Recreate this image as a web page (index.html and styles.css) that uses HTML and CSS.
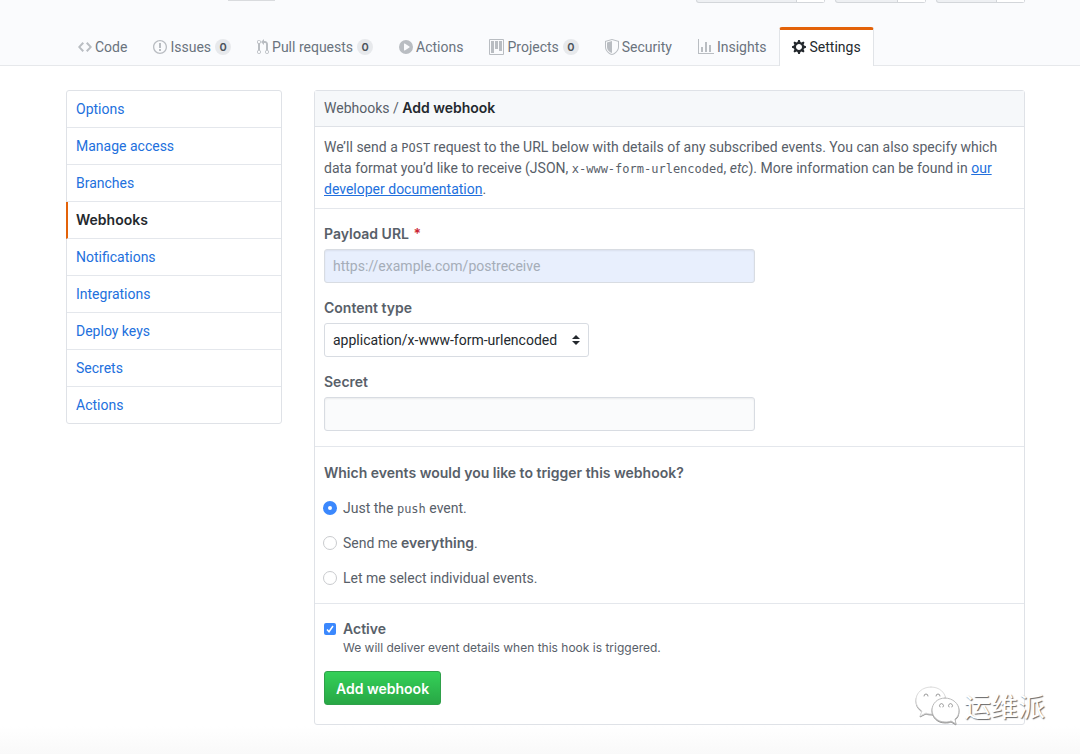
FILE: index.html
```html
<!DOCTYPE html>
<html lang="en">
<head>
<meta charset="utf-8">
<title>Add webhook</title>
<link rel="stylesheet" href="styles.css">
</head>
<body>
<header class="repo-head">
  <div class="repo-actions" aria-hidden="true">
    <span class="stub stub-label"></span>
    <span class="stub-pair pair-wide"><span></span><span></span></span>
    <span class="stub-pair pair-mid"><span></span><span></span></span>
    <span class="stub-pair pair-small"><span></span><span></span></span>
  </div>
  <nav class="tabs" aria-label="Repository">
    <a class="tab" href="#code"><svg class="icon" width="14" height="16" viewBox="0 0 14 16"><path fill-rule="evenodd" d="M9.5 3L8 4.5 11.5 8 8 11.5 9.5 13 14 8 9.500 3zm-5 0L0 8l4.500 5L6 11.500 2.500 8 6 4.500 4.500 3z"/></svg>Code</a>
    <a class="tab" href="#issues"><svg class="icon" width="14" height="16" viewBox="0 0 14 16"><path fill-rule="evenodd" d="M7 2.300c3.140 0 5.700 2.560 5.700 5.700s-2.560 5.700-5.700 5.700A5.710 5.710 0 011.300 8c0-3.140 2.560-5.700 5.700-5.700zM7 1C3.140 1 0 4.140 0 8s3.140 7 7 7 7-3.140 7-7-3.140-7-7-7zm1 3H6v5h2V4zm0 6H6v2h2v-2z"/></svg>Issues<span class="count">0</span></a>
    <a class="tab" href="#pulls"><svg class="icon" width="12" height="16" viewBox="0 0 12 16"><path fill-rule="evenodd" d="M11 11.280V5c-.030-.780-.340-1.470-.940-2.060C9.460 2.350 8.780 2.030 8 2H7V0L4 3l3 3V4h1c.270.020.480.110.690.310.210.200.300.420.310.690v6.280A1.993 1.993 0 0010 15a1.993 1.993 0 001-3.720zm-1 2.920c-.660 0-1.200-.550-1.200-1.200 0-.650.550-1.200 1.200-1.200.650 0 1.200.550 1.200 1.200 0 .650-.550 1.200-1.200 1.200zM4 3c0-1.110-.890-2-2-2a1.993 1.993 0 00-1 3.720v6.560A1.993 1.993 0 002 15a1.993 1.993 0 001-3.720V4.720c.590-.340 1-.980 1-1.720zm-.800 10c0 .660-.550 1.200-1.200 1.200-.650 0-1.200-.550-1.200-1.200 0-.650.550-1.200 1.200-1.200.650 0 1.200.550 1.200 1.200zM2 4.200C1.340 4.200.800 3.650.800 3c0-.650.550-1.200 1.200-1.200.650 0 1.200.550 1.200 1.200 0 .650-.550 1.200-1.200 1.200z"/></svg>Pull requests<span class="count">0</span></a>
    <a class="tab" href="#actions"><svg class="icon" width="14" height="16" viewBox="0 0 14 16"><path fill-rule="evenodd" d="M14 8A7 7 0 110 8a7 7 0 0114 0zm-8.223 3.482l4.599-3.066a.500.500 0 000-.832L5.777 4.518A.500.500 0 005 4.934v6.132a.500.500 0 00.777.416z"/></svg>Actions</a>
    <a class="tab" href="#projects"><svg class="icon" width="15" height="16" viewBox="0 0 15 16"><path fill-rule="evenodd" d="M10 12h3V2h-3v10zm-4-2h3V2H6v8zm-4 4h3V2H2v12zm-1 1h13V1H1v14zM14 0H1a1 1 0 00-1 1v14a1 1 0 001 1h13a1 1 0 001-1V1a1 1 0 00-1-1z"/></svg>Projects<span class="count">0</span></a>
    <a class="tab" href="#security"><svg class="icon" width="14" height="16" viewBox="0 0 14 16"><path fill-rule="evenodd" d="M0 2l7-2 7 2v6.020C14 12.690 8.690 16 7 16c-1.690 0-7-3.310-7-7.980V2zm1 .750L7 1l6 1.750v5.268C13 12.104 8.449 15 7 15c-1.449 0-6-2.896-6-6.982V2.750zm1 .750L7 2v12c-1.207 0-5-2.482-5-5.985V3.500z"/></svg>Security</a>
    <a class="tab" href="#insights"><svg class="icon" width="16" height="16" viewBox="0 0 16 16"><path fill-rule="evenodd" d="M16 14v1H0V0h1v14h15zM5 13H3V8h2v5zm4 0H7V3h2v10zm4 0h-2V6h2v7z"/></svg>Insights</a>
    <a class="tab tab-current" href="#settings" aria-current="page"><svg class="icon" width="14" height="16" viewBox="0 0 14 16"><path fill-rule="evenodd" d="M14 8.770v-1.600l-1.940-.640-.450-1.090.880-1.840-1.130-1.130-1.810.910-1.090-.450-.690-1.920h-1.600l-.630 1.940-1.110.450-1.840-.880-1.130 1.130.910 1.810-.450 1.090L0 7.230v1.590l1.940.640.450 1.090-.880 1.840 1.130 1.130 1.810-.910 1.090.450.690 1.920h1.590l.630-1.940 1.110-.450 1.840.880 1.130-1.130-.920-1.810.470-1.090L14 8.750v.020zM7 11c-1.660 0-3-1.340-3-3s1.340-3 3-3 3 1.340 3 3-1.340 3-3 3z"/></svg>Settings</a>
  </nav>
</header>

<main class="layout">
  <nav class="menu" aria-label="Settings">
    <a class="menu-item" href="#options">Options</a>
    <a class="menu-item" href="#access">Manage access</a>
    <a class="menu-item" href="#branches">Branches</a>
    <a class="menu-item menu-current" href="#webhooks" aria-current="page">Webhooks</a>
    <a class="menu-item" href="#notifications">Notifications</a>
    <a class="menu-item" href="#integrations">Integrations</a>
    <a class="menu-item" href="#keys">Deploy keys</a>
    <a class="menu-item" href="#secrets">Secrets</a>
    <a class="menu-item" href="#repo-actions">Actions</a>
  </nav>

  <form class="panel">
    <h1 class="panel-head">Webhooks / <strong>Add webhook</strong></h1>
    <p class="intro">We’ll send a <code>POST</code> request to the URL below with details of any subscribed events. You can also specify which data format you’d like to receive (JSON, <code>x-www-form-urlencoded</code>, <em>etc</em>). More information can be found in <a href="#docs">our developer documentation</a>.</p>

    <div class="section fields">
      <div class="field">
        <label for="url">Payload URL <span class="required">*</span></label>
        <input class="control autofill" id="url" type="text" placeholder="https://example.com/postreceive">
      </div>
      <div class="field">
        <label for="type">Content type</label>
        <select class="control select" id="type"><option>application/x-www-form-urlencoded</option><option>application/json</option></select>
      </div>
      <div class="field">
        <label for="secret">Secret</label>
        <input class="control" id="secret" type="text">
      </div>
    </div>

    <fieldset class="section events">
      <legend>Which events would you like to trigger this webhook?</legend>
      <label class="choice"><input type="radio" name="events" checked><span>Just the <code>push</code> event.</span></label>
      <label class="choice"><input type="radio" name="events"><span>Send me <strong>everything</strong>.</span></label>
      <label class="choice"><input type="radio" name="events"><span>Let me select individual events.</span></label>
    </fieldset>

    <div class="section submit">
      <label class="choice" for="active"><input type="checkbox" id="active" aria-describedby="active-note" checked><strong>Active</strong></label>
      <p class="note" id="active-note">We will deliver event details when this hook is triggered.</p>
      <button class="primary" type="submit">Add webhook</button>
    </div>
  </form>
</main>

<div class="watermark" lang="zh">
  <svg width="46" height="40" viewBox="0 0 46 40" fill="#fff" stroke-linecap="round">
    <path class="bubble" d="M17 1C8 1 2 7 2 14c0 5 2 8 6 11l-2 5 6-3c2 1 4 1 7 1 8 0 13-6 13-13C32 7 26 1 17 1z"/>
    <path class="bubble bubble-front" d="M31 12c-8 0-13 6-13 12s5 12 13 12c2 0 4 0 6-1l5 3-1-5c3-2 4-5 4-9 0-6-6-12-14-12z"/>
    <path class="eyes" d="M10 10a2 2 0 114 0M22 10a2 2 0 114 0M26 21a2 2 0 113 0M35 21a2 2 0 113 0"/>
  </svg>
  <span>运维派</span>
</div>
</body>
</html>
```
FILE: styles.css
```css
* { box-sizing: border-box; }

body {
  margin: 0;
  min-height: 100vh;
  background: #fff linear-gradient(#fff, #f9f9f9) bottom / 100% 28px no-repeat;
  color: #586069;
  font: 14px/20px Roboto, "Liberation Sans", sans-serif;
}

a { color: #2270dd; text-decoration: none; }
strong, label, legend, .menu-current, .primary, .count { font-family: Inter, "Liberation Sans", sans-serif; font-weight: 600; }
code { font: 12px/16px "DejaVu Sans Mono", "Liberation Mono", monospace; }

/* repository header */
.repo-head {
  padding: 0 55px 0 65px;
  background: #fafbfd;
  border-bottom: 1px solid #e6e8eb;
}

.repo-actions { display: flex; gap: 10px; height: 3px; margin-bottom: 24px; }
.stub { height: 1px; background: #d9dbde; }
.stub-label { width: 47px; margin: 0 auto 0 163px; }
.stub-pair { display: flex; border: 1px solid #d3d6da; border-top: 0; border-radius: 0 0 3px 3px; background: #eef0f3; }
.stub-pair span:first-child { flex: 1; }
.stub-pair span:last-child { width: 28px; background: #fff; border-left: 1px solid #d3d6da; }
.pair-wide { width: 129px; }
.pair-mid { width: 91px; }
.pair-small { width: 89px; }

.tabs { display: flex; margin-bottom: -1px; }
.tab {
  display: flex;
  align-items: center;
  height: 39px;
  padding: 0 12px 2px;
  border: 1px solid transparent;
  border-top: 3px solid transparent;
  border-bottom: 0;
  color: #6a737d;
  white-space: nowrap;
}
.tab .icon { margin-right: 3px; fill: #b9bdc2; }
.tab-current {
  background: #fff;
  border-color: #e36209 #e1e4e8;
  border-radius: 3px 3px 0 0;
  color: #24292e;
}
.tab-current .icon { fill: #24292e; }
.count {
  min-width: 16px;
  height: 16px;
  margin-left: 4px;
  border-radius: 8px;
  background: #e7e9ec;
  color: #4b525a;
  font-size: 11px;
  line-height: 16px;
  text-align: center;
}

.layout {
  display: grid;
  grid-template-columns: 216px minmax(0, 1fr);
  gap: 32px;
  align-items: start;
  padding: 24px 55px 29px 66px;
}

/* settings menu */
.menu { border: 1px solid #dfe2e7; border-radius: 3px; }
.menu-item { display: block; padding: 8px 9px; border-bottom: 1px solid #e4e7ec; }
.menu-item:last-child { border-bottom: 0; }
.menu-current {
  margin-left: -1px;
  padding-left: 8px;
  border-left: 2px solid #e36209;
  color: #24292e;
}

/* webhook form */
.panel { border: 1px solid #dfe2e7; border-radius: 3px; }
.panel-head {
  margin: 0;
  padding: 7px 9px 8px;
  background: #f6f8fa;
  border-bottom: 1px solid #dfe2e7;
  font-size: 14px;
  font-weight: 400;
}
.panel-head strong { color: #24292e; }
.intro { margin: 0; padding: 10px 9px 8px; line-height: 21px; }
.intro a { text-decoration: underline; }

.section { margin: 0; padding: 15px 9px; border: 0; border-top: 1px solid #e4e7ec; }
.fields { display: flex; flex-direction: column; gap: 15px; }
.field { display: flex; flex-direction: column; align-items: flex-start; gap: 5px; }
.required { margin-left: 1px; color: #cb2431; }

.control {
  width: 100%;
  max-width: 431px;
  height: 34px;
  padding: 0 8px;
  border: 1px solid #d8dce2;
  border-radius: 3px;
  background: #fafbfc;
  color: #24292e;
  font: inherit;
  box-shadow: inset 0 1px 2px rgba(27, 31, 35, 0.07);
}
.control::placeholder { color: #a5adb8; opacity: 1; }
.autofill { background: #e8effd; }
.select {
  width: auto;
  padding-right: 30px;
  appearance: none;
  background: #fff url('data:image/svg+xml,<svg xmlns="http://www.w3.org/2000/svg" width="8" height="10" viewBox="0 0 8 10"><path fill="%2324292e" d="M4 0l4 4H0zM0 6h8l-4 4z"/></svg>') right 8px center no-repeat;
  box-shadow: none;
}

.events { display: flex; flex-direction: column; gap: 15px; padding-top: 16px; }
.events legend { float: left; padding: 0; margin-bottom: 0; }
.choice { display: flex; align-items: center; gap: 6px; font-family: inherit; font-weight: 400; }
.choice input { appearance: none; flex: none; width: 14px; height: 14px; margin: 0 0 0 -1px; border: 1px solid #c9cbce; background: #fff; }
.choice input[type="radio"] { border-radius: 50%; }
.choice input[type="radio"]:checked { border: 5px solid #3b88fd; }
.choice input[type="checkbox"] {
  width: 12px;
  height: 12px;
  margin: 0 1px 0 0;
  border: 0;
  border-radius: 2px;
  background: #3b88fd url('data:image/svg+xml,<svg xmlns="http://www.w3.org/2000/svg" width="12" height="12" viewBox="0 0 12 12"><path fill="none" stroke="white" stroke-width="1.5" d="M3 6.500L5 8.700 9 3"/></svg>');
}

.submit { padding-bottom: 19px; }
.note { margin: 0 0 14px 19px; font-family: Inter, "Liberation Sans", sans-serif; font-size: 12px; line-height: 18px; }
.primary {
  height: 34px;
  padding: 0 11px;
  border: 1px solid #2fa04a;
  border-radius: 3px;
  background: linear-gradient(#34d058, #28a745);
  color: #fff;
  font-size: 14px;
}

/* stamp over the page corner */
.watermark {
  position: absolute;
  right: 35px;
  bottom: 28px;
  display: flex;
  align-items: center;
  gap: 4px;
  color: #fff;
  font: 27px/40px "Noto Sans CJK SC", sans-serif;
  text-shadow: 1px 1px 1px #666;
}
.bubble { stroke: #ddd; stroke-width: 1; filter: drop-shadow(0 1px 0 #999); }
.bubble-front { stroke: #bbb; }
.eyes { fill: none; stroke: #999; stroke-width: 1; }
```
